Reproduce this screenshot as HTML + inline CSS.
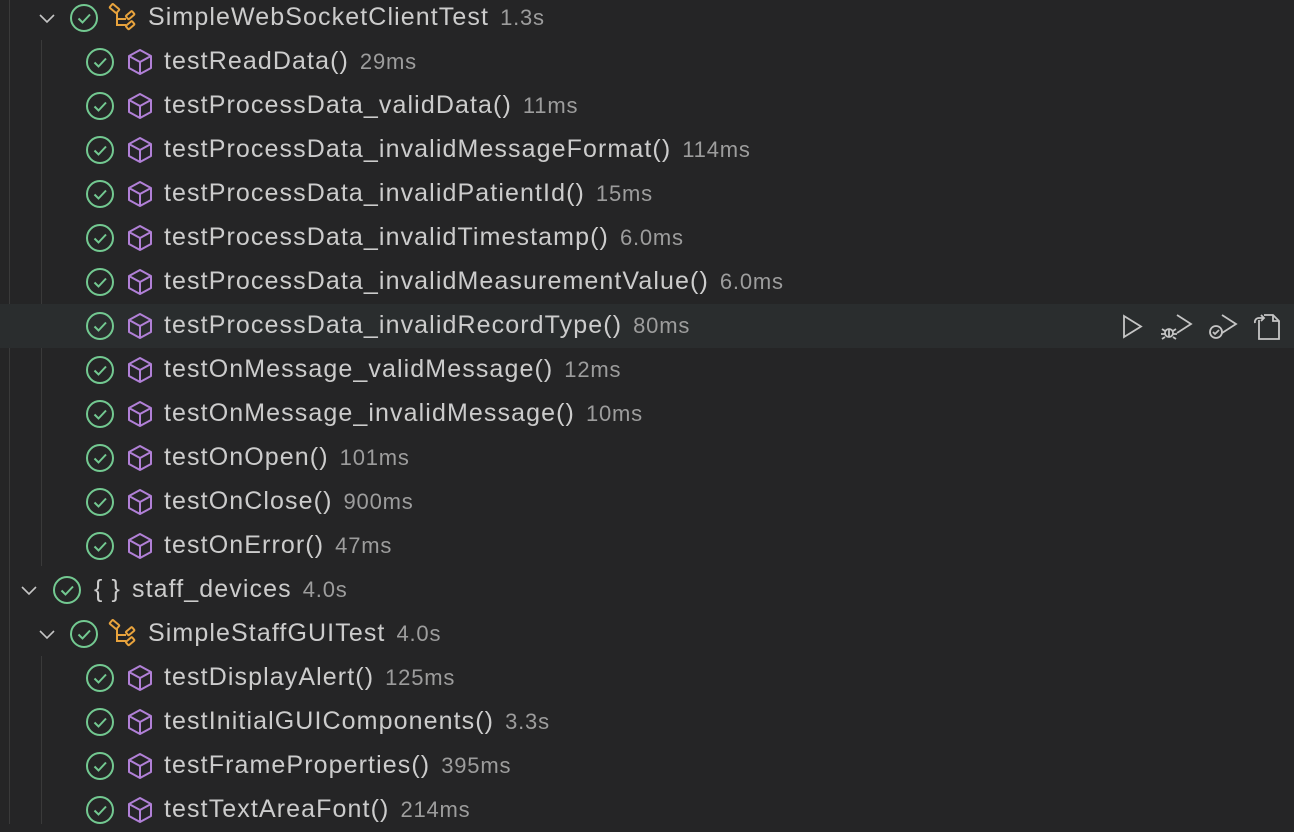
<!DOCTYPE html>
<html><head><meta charset="utf-8"><style>
body{margin:0;width:1294px;height:824px;background:#252526;overflow:hidden;font-family:"Liberation Sans",sans-serif;position:relative}
.row{position:absolute;left:0;width:1294px;height:44px}
.row.hov{background:#2a2d2e}
.t{position:absolute;top:7px;font-size:25px;color:#cccccc;white-space:nowrap;letter-spacing:1.1px}
.t span{color:#9d9d9d;font-size:22px;margin-left:11px;letter-spacing:0.8px}
svg{position:absolute}
.guide{position:absolute;width:1px;background:#3a3a3a}
</style></head><body>
<div class="guide" style="left:9px;top:0;height:824px"></div>
<div class="guide" style="left:41px;top:40px;height:526px"></div>
<div class="guide" style="left:41px;top:656px;height:168px"></div>
<div id="c"></div>
<script>
const check=(x)=>`<svg style="left:${x-15}px;top:7px" width="30" height="30" viewBox="0 0 30 30"><circle cx="15" cy="15" r="13" fill="none" stroke="#73c991" stroke-width="2"/><path d="M9.5 15.5l4 4 7.5-8" fill="none" stroke="#73c991" stroke-width="2"/></svg>`;
const cube=(x)=>`<svg style="left:${x-14}px;top:8px" width="28" height="28" viewBox="0 0 28 28"><path d="M14 2l11 6v12L14 26 3 20V8z M3 8l11 6 11-6 M14 14v12" fill="none" stroke="#b180d7" stroke-width="2" stroke-linejoin="round"/></svg>`;
const cls=(x)=>`<svg style="left:${x-15}px;top:7px" width="30" height="30" viewBox="0 0 30 30"><g fill="none" stroke="#e8a33d" stroke-width="2"><rect x="2" y="3" width="9" height="5" rx="1" transform="rotate(40 6.5 5.5)"/><rect x="18" y="10" width="8" height="4.5" rx="1" transform="rotate(-40 22 12)"/><rect x="18" y="20" width="8" height="4.5" rx="1" transform="rotate(-40 22 22)"/><path d="M9 10v12h9 M9 16h9"/></g></svg>`;
const chev=(x)=>`<svg style="left:${x-10}px;top:12px" width="20" height="20" viewBox="0 0 20 20"><path d="M3 7l7 7 7-7" fill="none" stroke="#c5c5c5" stroke-width="1.6"/></svg>`;
const rows=[
['c','SimpleWebSocketClientTest','1.3s'],
['m','testReadData()','29ms'],['m','testProcessData_validData()','11ms'],['m','testProcessData_invalidMessageFormat()','114ms'],['m','testProcessData_invalidPatientId()','15ms'],['m','testProcessData_invalidTimestamp()','6.0ms'],['m','testProcessData_invalidMeasurementValue()','6.0ms'],['m','testProcessData_invalidRecordType()','80ms'],['m','testOnMessage_validMessage()','12ms'],['m','testOnMessage_invalidMessage()','10ms'],['m','testOnOpen()','101ms'],['m','testOnClose()','900ms'],['m','testOnError()','47ms'],
['p','staff_devices','4.0s'],['c','SimpleStaffGUITest','4.0s'],
['m','testDisplayAlert()','125ms'],['m','testInitialGUIComponents()','3.3s'],['m','testFrameProperties()','395ms'],['m','testTextAreaFont()','214ms']];
let h='';
rows.forEach((r,i)=>{const top=-4+i*44;let inner='';
if(r[0]=='m'){inner=check(100)+cube(140)+`<div class="t" style="left:164px">${r[1]}<span>${r[2]}</span></div>`;}
else if(r[0]=='c'){inner=chev(47)+check(84)+cls(123)+`<div class="t" style="left:148px">${r[1]}<span>${r[2]}</span></div>`;}
else{inner=chev(29)+check(67)+`<div class="t" style="left:94px;color:#cccccc">{ }</div><div class="t" style="left:132px">${r[1]}<span>${r[2]}</span></div>`;}
if(i==7){inner+=`<svg style="left:1118px;top:7px" width="170" height="32" viewBox="0 0 170 32"><g fill="none" stroke="#c5c5c5" stroke-width="1.8"><path d="M6 5l17 10.5L6 26z"/><path d="M59 4l14 9-14 9"/><circle cx="51" cy="22" r="4"/><path d="M44 18l3 2M58 18l-3 2M43 23h4M55 23h4M44 28l3-2M58 28l-3-2M51 18v8"/><path d="M104 4l14 9-14 9"/><circle cx="98" cy="21" r="6"/><path d="M95 21l2 2 4-4"/><path d="M141 9V28h20V10l-6-6h-9"/><path d="M155 4v6h6"/><path d="M137 12a4 4 0 0 1 4-5h5M143 4l3 3-3 3"/></g></svg>`;}
h+=`<div class="row${i==7?' hov':''}" style="top:${top}px">${inner}</div>`;});
document.getElementById('c').innerHTML=h;
</script>
</body></html>
